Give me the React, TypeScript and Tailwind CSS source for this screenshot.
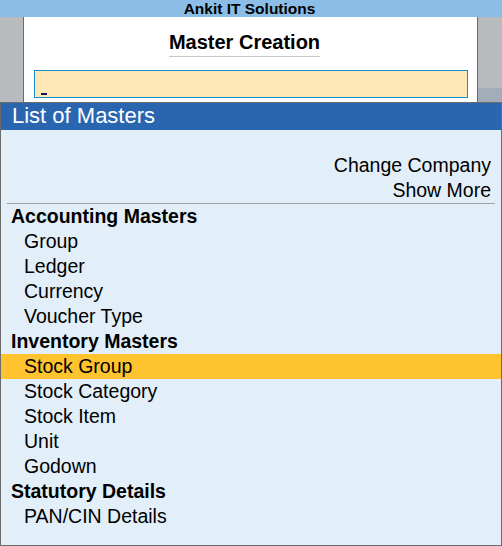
import React from 'react';

const sections = [
  { title: 'Accounting Masters', items: ['Group', 'Ledger', 'Currency', 'Voucher Type'] },
  { title: 'Inventory Masters', items: ['Stock Group', 'Stock Category', 'Stock Item', 'Unit', 'Godown'] },
  { title: 'Statutory Details', items: ['PAN/CIN Details'] },
];

const selected = 'Stock Group';

const App = () => {
  return (
    <div className="w-[502px] h-[546px] flex flex-col overflow-hidden font-['Liberation_Sans',Arial,sans-serif] text-black">
      {/* company bar */}
      <div className="h-[17px] bg-[#8bbde6] text-center font-bold text-[15.5px] leading-[17px] pr-[3px]">
        Ankit IT Solutions
      </div>

      {/* master creation panel */}
      <div className="flex h-[85px] bg-[#b7bbbe]">
        <div className="w-[23px]" />
        <div className="w-[455px] bg-white border-x border-[#6b6b6b] flex flex-col items-center">
          <div className="mt-[13px] mr-[12px] font-bold text-[20px] leading-[25px] pb-[1px] border-b border-[#c8c8c8]">
            Master Creation
          </div>
          <div className="mt-[13px] w-[434px] h-[28px] bg-[#fde8b5] border border-[#1a8fd0] flex items-end pl-[6px] pb-[2px]">
            <div className="w-[6px] h-[2px] bg-[#0b1a5e]" />
          </div>
        </div>
        <div className="flex-1 flex flex-col">
          <div className="flex-1" />
          <div className="h-[14px] bg-[#a3adb8]" />
        </div>
      </div>

      {/* list of masters */}
      <div className="flex-1 flex flex-col border border-[#6b6b6b] bg-[#e2eff9] text-[19.5px] leading-[25px]">
        <div className="h-[27px] bg-[#2a66b0] text-white text-[22px] leading-[26px] pl-[11px]">
          List of Masters
        </div>
        <div className="pt-[23px] text-right pr-[10px]">
          <div>Change Company</div>
          <div>Show More</div>
        </div>
        <div className="mx-[6px] h-px bg-[#a0a0a0]" />
        {sections.map((s) => (
          <div key={s.title}>
            <div className="font-bold pl-[10px]">{s.title}</div>
            {s.items.map((item) => (
              <div key={item} className={item === selected ? 'pl-[23px] bg-[#fec32f]' : 'pl-[23px]'}>
                {item}
              </div>
            ))}
          </div>
        ))}
      </div>
    </div>
  );
};

export default App;
